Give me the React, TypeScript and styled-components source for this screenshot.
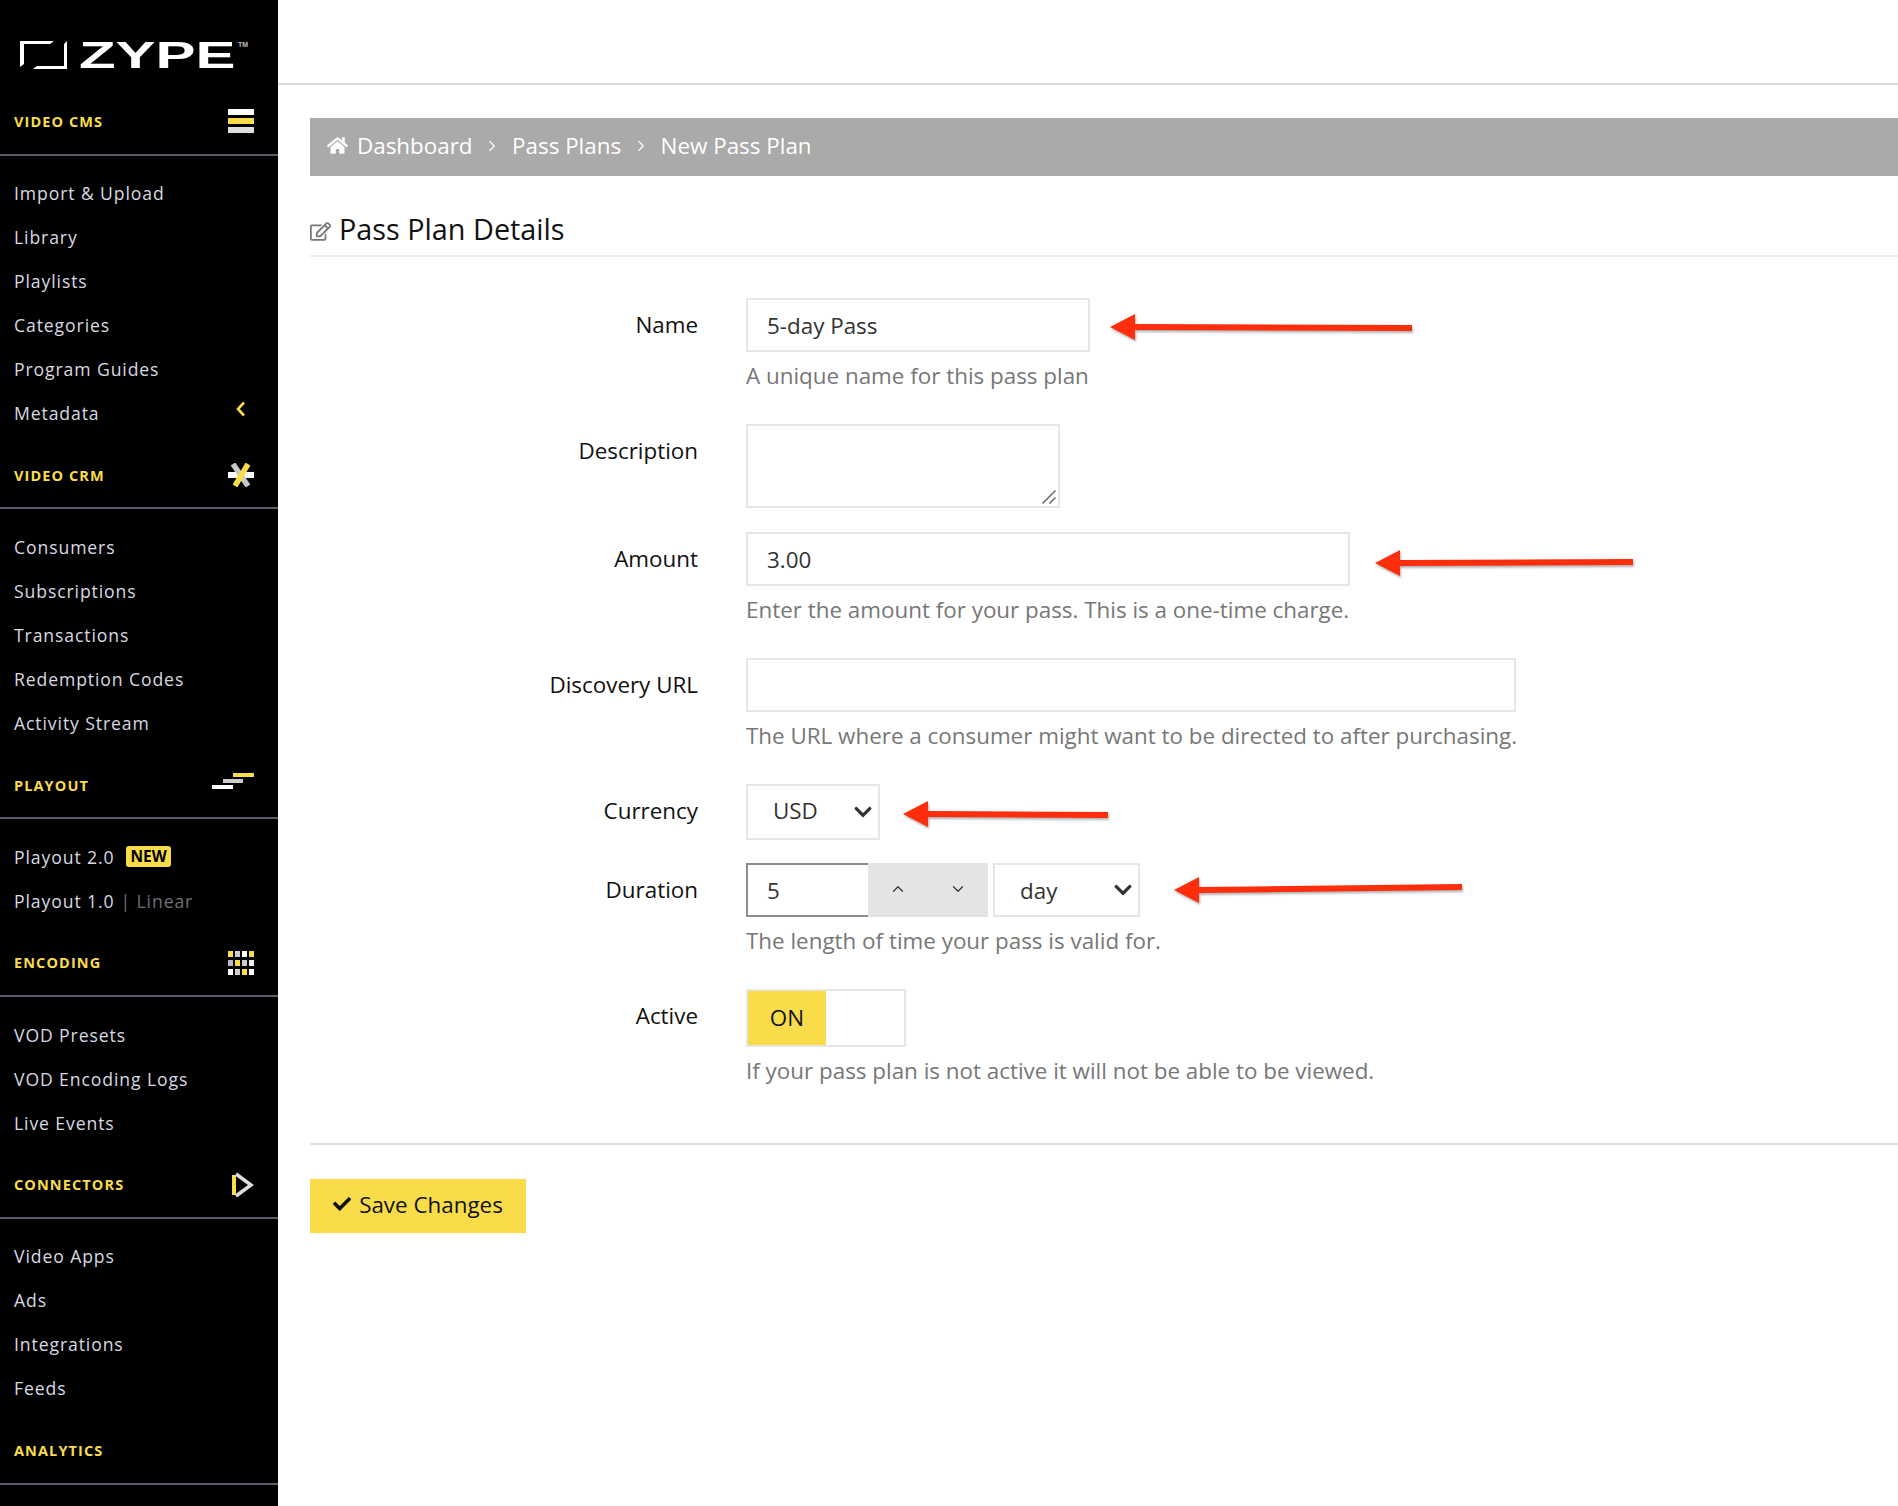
import React from "react";
import styled, { createGlobalStyle } from "styled-components";
import { FaHome, FaRegEdit, FaCheck, FaChevronDown } from "react-icons/fa";
import { ChevronRight, ChevronUp, ChevronDown } from "lucide-react";

const GlobalStyle = createGlobalStyle`
  * {
    box-sizing: border-box;
  }
  html,
  body {
    margin: 0;
    padding: 0;
    background: #fff;
    font-family: "Open Sans", "Liberation Sans", sans-serif;
  }
`;

const Page = styled.div`
  display: flex;
  width: 100%;
  height: 1506px;
  overflow: hidden;
`;

const Sidebar = styled.aside`
  flex: 0 0 278px;
  background: #000;
`;

const LogoBox = styled.div`
  display: flex;
  align-items: flex-start;
  height: 81px;
  padding: 40px 0 0 20px;
  svg {
    display: block;
    flex: none;
  }
`;

const LogoWord = styled.span`
  display: block;
  width: 154px;
  margin: 1px 0 0 12px;
  color: #fff;
  font: 700 37px/30px "Liberation Sans", sans-serif;
  white-space: nowrap;
  transform: scaleX(1.62);
  transform-origin: left center;
`;

const LogoMark = styled.span`
  margin-left: 5px;
  color: #bbb;
  font: 700 7px/10px "Liberation Sans", sans-serif;
`;

const SectionHeader = styled.div`
  display: flex;
  justify-content: space-between;
  align-items: center;
  height: 74.6px;
  padding: 8px 24px 0 14px;
  border-bottom: 2px solid #5a5c68;
  svg {
    display: block;
  }
`;

const SectionTitle = styled.span`
  color: #f9dc4a;
  font-size: 14.5px;
  font-weight: 700;
  letter-spacing: 1.1px;
`;

const NavList = styled.ul`
  list-style: none;
  margin: 0;
  padding: 15.3px 0 0;
`;

const NavItem = styled.li`
  display: flex;
  align-items: center;
  height: 44px;
  padding: 0 32px 0 14px;
  color: #d8d9e0;
  font-size: 17.6px;
  letter-spacing: 0.9px;
  white-space: nowrap;
`;

const NavBack = styled.span`
  margin-left: auto;
  margin-top: -7px;
  svg {
    display: block;
  }
`;

const NewBadge = styled.span`
  margin-left: 12px;
  padding: 0 4px;
  background: #f9dc4a;
  border-radius: 3px;
  color: #000;
  font-size: 15.5px;
  font-weight: 700;
  line-height: 21px;
  letter-spacing: 0;
`;

const NavMuted = styled.span`
  margin-left: 6px;
  color: #6f7076;
`;

const Main = styled.main`
  flex: 1;
  min-width: 0;
`;

const TopBar = styled.header`
  height: 85px;
  border-bottom: 2px solid #d9d9d9;
`;

const Content = styled.div`
  padding: 33px 0 0 32px;
`;

const Breadcrumbs = styled.nav`
  display: flex;
  align-items: center;
  height: 58px;
  padding: 0 0 3px 17px;
  background: #aaa;
  color: #fff;
  font-size: 22.4px;
`;

const Crumb = styled.span`
  margin-left: ${(props: { $first?: boolean }) => (props.$first ? "9px" : "0")};
`;

const CrumbSeparator = styled.span`
  display: flex;
  width: 39.5px;
  justify-content: center;
`;

const PanelTitle = styled.h2`
  display: flex;
  align-items: center;
  gap: 8px;
  height: 81px;
  margin: 0;
  padding-top: 26px;
  border-bottom: 2px solid #eee;
  color: #111;
  font-size: 28.8px;
  font-weight: 400;
  svg {
    margin-top: 6px;
    color: #777;
  }
`;

const Form = styled.form`
  padding-top: 41px;
`;

const Row = styled.div<{ $gap?: number }>`
  display: flex;
  margin-bottom: ${(props) => props.$gap ?? 25}px;
`;

const Label = styled.label`
  flex: 0 0 388px;
  line-height: 54px;
  text-align: right;
  color: #111;
  font-size: 22.4px;
`;

const Control = styled.div`
  margin-left: 48px;
  flex: 1;
`;

const ControlLine = styled.div`
  display: flex;
  align-items: center;
`;

const TextInput = styled.input<{ $width: number }>`
  width: ${(props) => props.$width}px;
  height: 54px;
  padding: 0 19px;
  border: 2px solid #e6e6e6;
  outline: none;
  background: #fff;
  color: #333;
  font: 400 22.4px "Open Sans", sans-serif;
`;

const TextAreaBox = styled.div`
  position: relative;
  width: 314px;
  height: 84px;
  svg {
    position: absolute;
    right: 4px;
    bottom: 4px;
  }
`;

const TextArea = styled.textarea`
  display: block;
  width: 100%;
  height: 100%;
  border: 2px solid #e6e6e6;
  outline: none;
  background: #fff;
  resize: none;
`;

const Help = styled.p`
  margin: 0;
  padding: 10px 0 9px;
  color: #777;
  font-size: 22.4px;
  line-height: 28px;
`;

const SelectBox = styled.div<{ $width: number; $height: number }>`
  position: relative;
  width: ${(props) => props.$width}px;
  height: ${(props) => props.$height}px;
  svg {
    position: absolute;
    top: 50%;
    right: 7px;
    margin-top: -10px;
    color: #333;
    pointer-events: none;
  }
`;

const Select = styled.select<{ $lift: number }>`
  width: 100%;
  height: 100%;
  padding: 0 0 ${(props) => props.$lift}px 25px;
  appearance: none;
  border: 2px solid #e6e6e6;
  border-radius: 0;
  outline: none;
  background: #fff;
  color: #333;
  font: 400 22.4px "Open Sans", sans-serif;
`;

const NumberInput = styled.input`
  width: 122px;
  height: 54px;
  padding: 0 19px;
  border: 2px solid #8e8e8e;
  border-right: none;
  outline: none;
  color: #333;
  font: 400 22.4px "Open Sans", sans-serif;
`;

const Spinner = styled.div`
  display: flex;
  width: 120px;
  height: 54px;
  margin-right: 5px;
  background: #e4e4e4;
`;

const SpinButton = styled.button`
  flex: 1;
  display: flex;
  justify-content: center;
  align-items: center;
  padding: 0 0 3px;
  border: none;
  background: none;
  color: #333;
`;

const Toggle = styled.div`
  display: flex;
  width: 160px;
  height: 58px;
  border: 2px solid #e6e6e6;
`;

const ToggleOn = styled.span`
  display: flex;
  justify-content: center;
  align-items: center;
  width: 78px;
  padding-bottom: 2px;
  background: #f9dc4a;
  color: #111;
  font-size: 22.4px;
`;

const Arrow = styled.svg<{ $gap: number; $dy: number }>`
  flex: none;
  margin-left: ${(props) => props.$gap}px;
  overflow: visible;
  transform: translateY(${(props) => props.$dy}px);
  filter: drop-shadow(1px 2px 1px rgba(0, 0, 0, 0.3));
`;

const Footer = styled.div`
  margin-top: 49px;
  padding-top: 34px;
  border-top: 2px solid #e0e0e0;
`;

const SaveButton = styled.button`
  display: flex;
  align-items: center;
  justify-content: center;
  gap: 8px;
  width: 216px;
  height: 54px;
  padding: 0 0 4px;
  border: none;
  background: #f9dc4a;
  color: #111;
  font: 400 22.4px "Open Sans", sans-serif;
`;

const LogoFrame = () => (
  <svg width="47" height="30" viewBox="0 0 47 30">
    <polygon points="0,1 34,1 30,4 4,4 4,24 0,27" fill="#fff" />
    <polygon points="47,1 47,29 13,29 17,26 44,26 44,4" fill="#fff" />
  </svg>
);

const MenuIcon = () => (
  <svg width="26" height="24" viewBox="0 0 26 24">
    <rect y="0" width="26" height="6" fill="#fff" />
    <rect y="9" width="26" height="6" fill="#f9dc4a" />
    <rect y="18" width="26" height="6" fill="#ddd" />
  </svg>
);

const CrmIcon = () => (
  <svg width="26" height="24" viewBox="0 0 26 24">
    <rect y="9" width="26" height="6" fill="#fff" />
    <path d="M5 1 L20 23" stroke="#c9c9c9" strokeWidth="5.5" />
    <path d="M7 23 L20 1" stroke="#f9dc4a" strokeWidth="5.5" />
  </svg>
);

const PlayoutIcon = () => (
  <svg width="42" height="24" viewBox="0 0 42 24">
    <rect x="21" y="0" width="21" height="4" fill="#f9dc4a" />
    <rect x="11" y="6" width="20" height="4" fill="#ccc" />
    <rect x="0" y="12" width="21" height="4" fill="#fff" />
  </svg>
);

const gridCells = [
  "#f9dc4a", "#ccc", "#fff", "#f9dc4a",
  "#bbb", "#f9dc4a", "#ccc", "#eee",
  "#fff", "#ccc", "#f9dc4a", "#fff",
];

const EncodingIcon = () => (
  <svg width="26" height="24" viewBox="0 0 26 24">
    {gridCells.map((color, i) => (
      <rect key={i} x={(i % 4) * 7} y={Math.floor(i / 4) * 9} width="5" height="6" fill={color} />
    ))}
  </svg>
);

const ConnectorIcon = () => (
  <svg width="22" height="26" viewBox="0 0 22 26">
    <rect x="0" y="3" width="4" height="20" fill="#f9dc4a" />
    <path d="M4 2 L19 13 L4 24" fill="none" stroke="#ddd" strokeWidth="3.5" />
  </svg>
);

const BackIcon = () => (
  <svg width="10" height="16" viewBox="0 0 10 16">
    <path d="M8 1.5 L2 8 L8 14.5" fill="none" stroke="#f9dc4a" strokeWidth="2.6" />
  </svg>
);

const GripIcon = () => (
  <svg width="14" height="14" viewBox="0 0 14 14">
    <path d="M0.5 13.5 L13.5 0.5 M7.5 13.5 L13.5 7.5" stroke="#666" strokeWidth="1.5" />
  </svg>
);

// rise: how far the tail end sits above the tip, these arrows were drawn by hand
const RedArrow = ({ length, gap, dy, rise = 0 }: { length: number; gap: number; dy: number; rise?: number }) => (
  <Arrow $gap={gap} $dy={dy} width={length} height="26" viewBox={`0 0 ${length} 26`}>
    <polygon
      points={`0,13 25,0 25,10 ${length},${10 - rise} ${length},${16 - rise} 25,16 25,26`}
      fill="#fe2d0b"
    />
  </Arrow>
);

const sections = [
  {
    title: "VIDEO CMS",
    icon: <MenuIcon />,
    items: ["Import & Upload", "Library", "Playlists", "Categories", "Program Guides", "Metadata"],
  },
  {
    title: "VIDEO CRM",
    icon: <CrmIcon />,
    items: ["Consumers", "Subscriptions", "Transactions", "Redemption Codes", "Activity Stream"],
  },
  { title: "PLAYOUT", icon: <PlayoutIcon />, items: ["Playout 2.0", "Playout 1.0"] },
  { title: "ENCODING", icon: <EncodingIcon />, items: ["VOD Presets", "VOD Encoding Logs", "Live Events"] },
  { title: "CONNECTORS", icon: <ConnectorIcon />, items: ["Video Apps", "Ads", "Integrations", "Feeds"] },
  { title: "ANALYTICS", icon: null, items: [] },
];

const App: React.FC = () => {
  return (
    <>
      <GlobalStyle />
      <Page>
        <Sidebar>
          <LogoBox>
            <LogoFrame />
            <LogoWord>ZYPE</LogoWord>
            <LogoMark>TM</LogoMark>
          </LogoBox>
          {sections.map((section) => (
            <section key={section.title}>
              <SectionHeader>
                <SectionTitle>{section.title}</SectionTitle>
                {section.icon}
              </SectionHeader>
              {section.items.length > 0 && (
                <NavList>
                  {section.items.map((item) => (
                    <NavItem key={item}>
                      {item}
                      {item === "Metadata" && (
                        <NavBack>
                          <BackIcon />
                        </NavBack>
                      )}
                      {item === "Playout 2.0" && <NewBadge>NEW</NewBadge>}
                      {item === "Playout 1.0" && <NavMuted>| Linear</NavMuted>}
                    </NavItem>
                  ))}
                </NavList>
              )}
            </section>
          ))}
        </Sidebar>
        <Main>
          <TopBar />
          <Content>
            <Breadcrumbs>
              <FaHome size={21} />
              <Crumb $first>Dashboard</Crumb>
              <CrumbSeparator>
                <ChevronRight size={18} strokeWidth={1.5} />
              </CrumbSeparator>
              <Crumb>Pass Plans</Crumb>
              <CrumbSeparator>
                <ChevronRight size={18} strokeWidth={1.5} />
              </CrumbSeparator>
              <Crumb>New Pass Plan</Crumb>
            </Breadcrumbs>
            <PanelTitle>
              <FaRegEdit size={21} />
              Pass Plan Details
            </PanelTitle>
            <Form>
              <Row>
                <Label>Name</Label>
                <Control>
                  <ControlLine>
                    <TextInput $width={344} defaultValue="5-day Pass" />
                    <RedArrow length={302} gap={20} dy={2} rise={-1} />
                  </ControlLine>
                  <Help>A unique name for this pass plan</Help>
                </Control>
              </Row>
              <Row $gap={24}>
                <Label>Description</Label>
                <Control>
                  <TextAreaBox>
                    <TextArea />
                    <GripIcon />
                  </TextAreaBox>
                </Control>
              </Row>
              <Row>
                <Label>Amount</Label>
                <Control>
                  <ControlLine>
                    <TextInput $width={604} defaultValue="3.00" />
                    <RedArrow length={258} gap={25} dy={4} rise={1} />
                  </ControlLine>
                  <Help>Enter the amount for your pass. This is a one-time charge.</Help>
                </Control>
              </Row>
              <Row>
                <Label>Discovery URL</Label>
                <Control>
                  <TextInput $width={770} />
                  <Help>The URL where a consumer might want to be directed to after purchasing.</Help>
                </Control>
              </Row>
              <Row $gap={23}>
                <Label>Currency</Label>
                <Control>
                  <ControlLine>
                    <SelectBox $width={134} $height={56}>
                      <Select $lift={3} defaultValue="USD">
                        <option>USD</option>
                      </Select>
                      <FaChevronDown size={20} />
                    </SelectBox>
                    <RedArrow length={205} gap={23} dy={2} rise={-1} />
                  </ControlLine>
                </Control>
              </Row>
              <Row>
                <Label>Duration</Label>
                <Control>
                  <ControlLine>
                    <NumberInput defaultValue="5" />
                    <Spinner>
                      <SpinButton type="button">
                        <ChevronUp size={18} strokeWidth={1.6} />
                      </SpinButton>
                      <SpinButton type="button">
                        <ChevronDown size={18} strokeWidth={1.6} />
                      </SpinButton>
                    </Spinner>
                    <SelectBox $width={147} $height={54}>
                      <Select $lift={0} defaultValue="day">
                        <option>day</option>
                      </Select>
                      <FaChevronDown size={20} />
                    </SelectBox>
                    <RedArrow length={288} gap={34} dy={0} rise={3} />
                  </ControlLine>
                  <Help>The length of time your pass is valid for.</Help>
                </Control>
              </Row>
              <Row>
                <Label>Active</Label>
                <Control>
                  <Toggle>
                    <ToggleOn>ON</ToggleOn>
                  </Toggle>
                  <Help>If your pass plan is not active it will not be able to be viewed.</Help>
                </Control>
              </Row>
              <Footer>
                <SaveButton type="button">
                  <FaCheck size={18} />
                  Save Changes
                </SaveButton>
              </Footer>
            </Form>
          </Content>
        </Main>
      </Page>
    </>
  );
};

export default App;
